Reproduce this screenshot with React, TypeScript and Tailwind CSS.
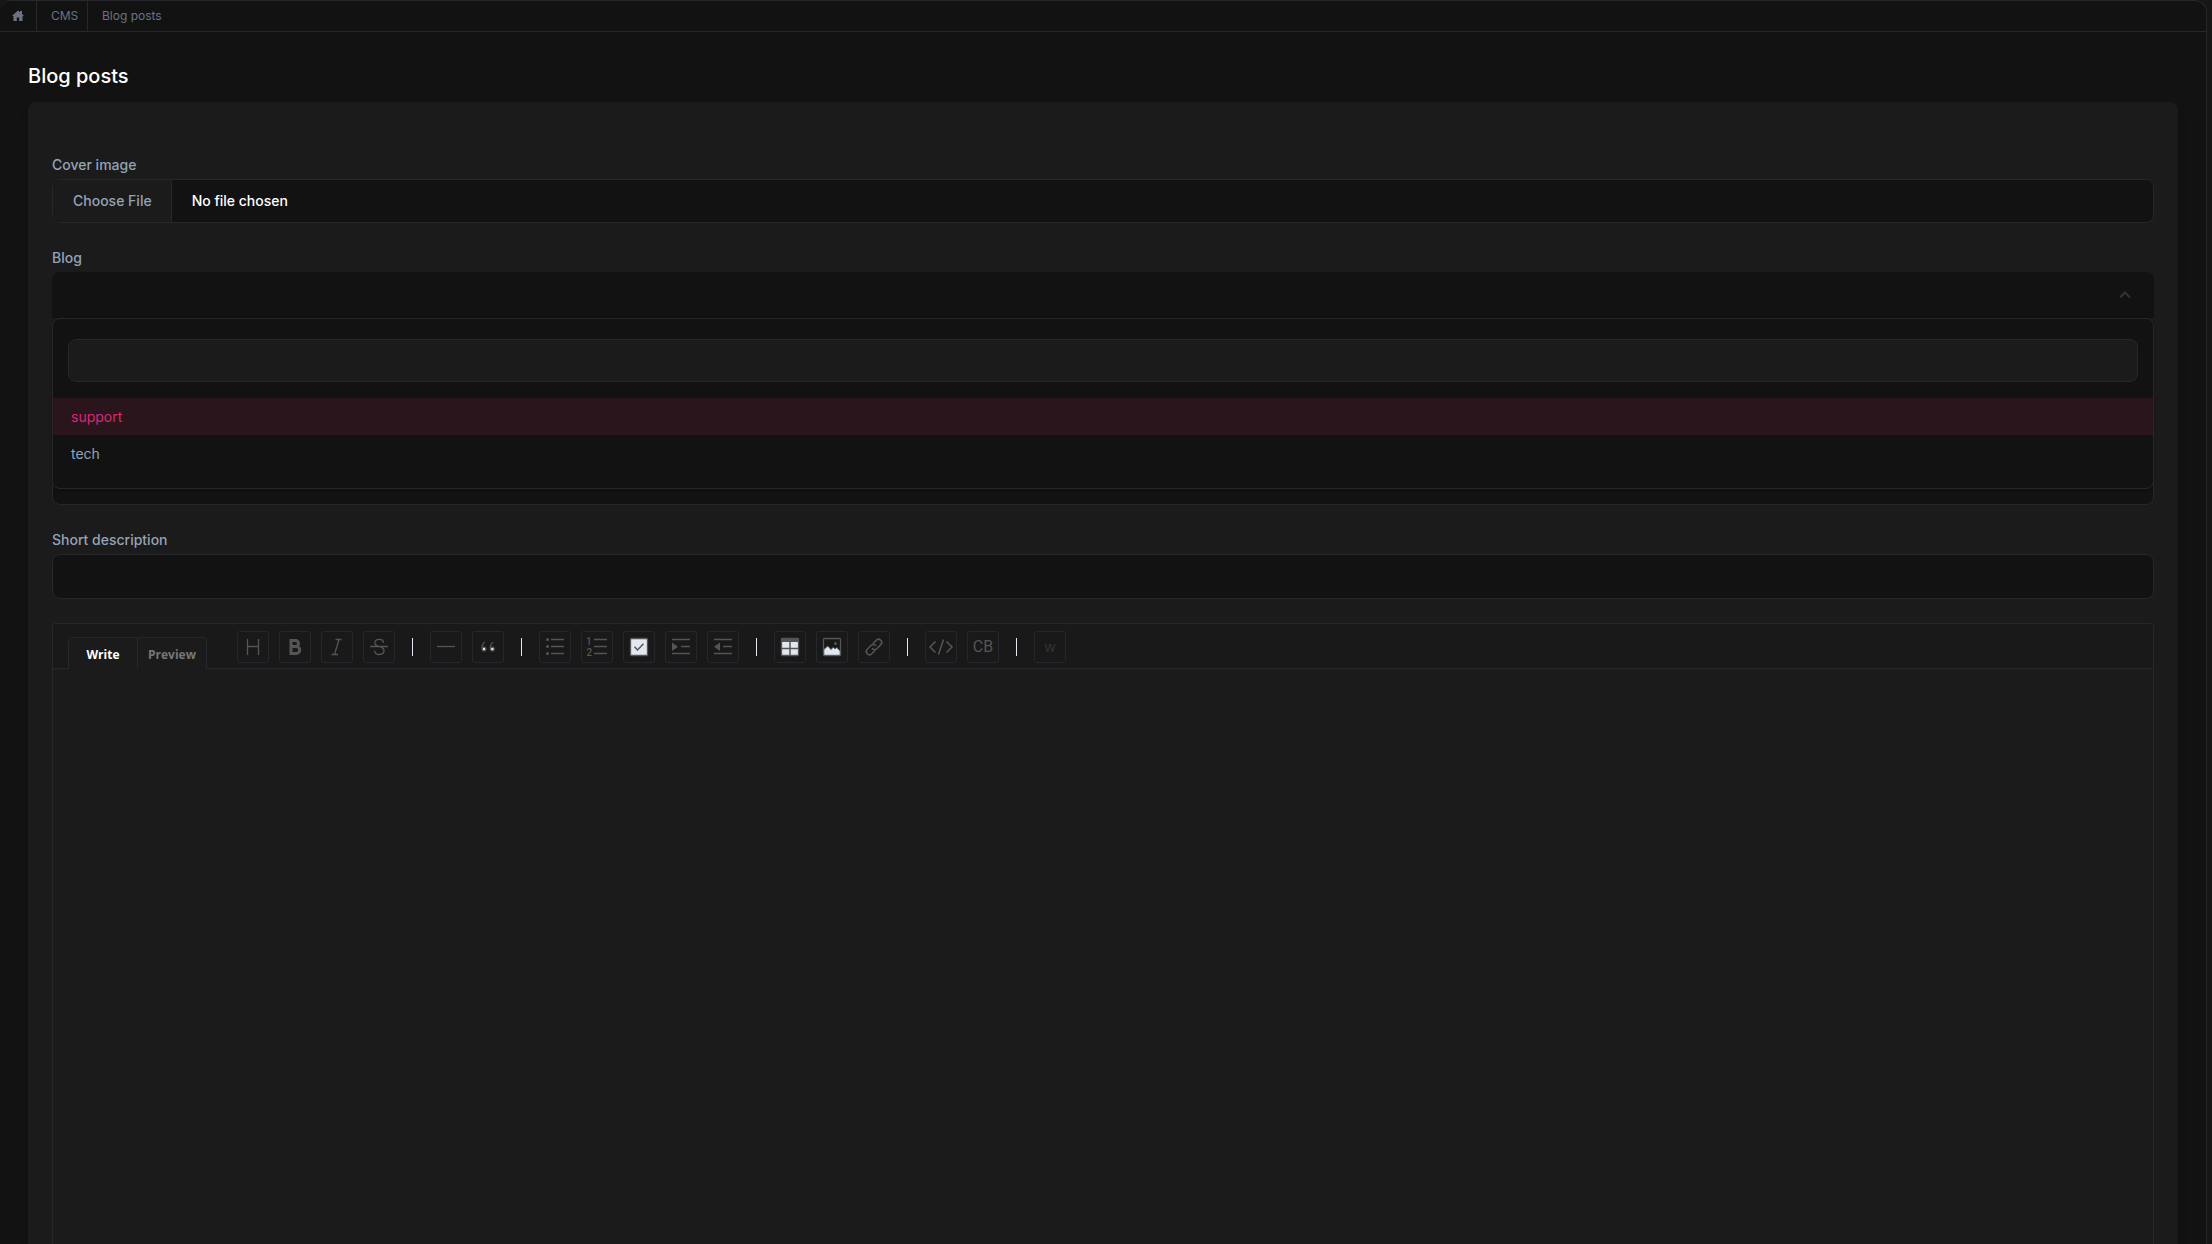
import type { ReactNode } from "react";

const fieldClass =
  "block h-[45px] w-full rounded-lg border border-[#25272b] bg-[#121212] px-5 text-sm text-white outline-none";
const labelClass = "mb-1 block text-sm leading-[21px] font-medium text-[#94a3b8]";

function Icon({ children }: { children: ReactNode }) {
  return (
    <svg viewBox="0 0 32 32" className="size-8 shrink-0" fill="none" stroke="#555" strokeWidth="1.3" aria-hidden="true">
      {children}
    </svg>
  );
}

type Tool = { name: string; icon: ReactNode };

const groups: Tool[][] = [
  [
    { name: "Headings", icon: <Icon><path d="M10.5 8v16M21.5 8v16M10.5 15.500h11" /></Icon> },
    {
      name: "Bold",
      icon: (
        <Icon>
          <path d="M12 9.500h4.500a3 3 0 0 1 0 6H12zM12 15.500h5.200a3.500 3.500 0 0 1 0 7H12z" strokeWidth="3" />
        </Icon>
      ),
    },
    { name: "Italic", icon: <Icon><path d="M14.500 8.500h6M10.500 23.500h6.500M18 8.500l-4.500 15" /></Icon> },
    {
      name: "Strike",
      icon: (
        <Icon>
          <path d="M7 15.500h18M20.500 12c0-2.300-1.800-3.700-4.300-3.700s-4.300 1.400-4.300 3.500c0 2 1.500 3 4.100 3.700M17.500 15.800c2.200.7 3.500 1.700 3.500 3.800 0 2.400-2 3.900-4.700 3.900-2.800 0-4.800-1.500-4.800-4" />
        </Icon>
      ),
    },
  ],
  [
    { name: "Line", icon: <Icon><path d="M7 15.500h18" /></Icon> },
    {
      name: "Blockquote",
      icon: (
        <Icon>
          <path d="M13 11.200c-1.700.9-3 3-3 6M21.300 11.200c-1.700.9-3 3-3 6" />
          <circle cx="12" cy="18" r="1.900" fill="#e2e8f0" />
          <circle cx="20.300" cy="18" r="1.900" fill="#e2e8f0" />
        </Icon>
      ),
    },
  ],
  [
    {
      name: "Unordered list",
      icon: (
        <Icon>
          <path d="M12 8.500h13M12 15.500h13M12 22.500h13" />
          <g fill="#555" stroke="none">
            <circle cx="8.500" cy="8.500" r="1.500" />
            <circle cx="8.500" cy="15.500" r="1.500" />
            <circle cx="8.500" cy="22.500" r="1.500" />
          </g>
        </Icon>
      ),
    },
    {
      name: "Ordered list",
      icon: (
        <Icon>
          <path d="M13 8.500h13M13 15.500h13M13 22.500h13" />
          <g fill="#555" stroke="none" fontFamily="Roboto, sans-serif" fontSize="10" fontWeight="500">
            <text x="5" y="13.500">1</text>
            <text x="5.500" y="25">2</text>
          </g>
        </Icon>
      ),
    },
    {
      name: "Task",
      icon: (
        <Icon>
          <rect x="7.500" y="7.500" width="17" height="17" rx="1" fill="#e2e8f0" />
          <path d="M11.500 15.800l3 3.200 6-6.300" strokeWidth="1.500" />
        </Icon>
      ),
    },
    {
      name: "Indent",
      icon: (
        <Icon>
          <path d="M7 8.500h18M16 15.500h9M7 22.500h18" />
          <path d="M7 11.500l6 4.200-6 4.200z" fill="#555" stroke="none" />
        </Icon>
      ),
    },
    {
      name: "Outdent",
      icon: (
        <Icon>
          <path d="M7 8.500h18M16 15.500h9M7 22.500h18" />
          <path d="M13 11.500l-6 4.200 6 4.200z" fill="#555" stroke="none" />
        </Icon>
      ),
    },
  ],
  [
    {
      name: "Insert table",
      icon: (
        <Icon>
          <rect x="7.500" y="7.500" width="17" height="17" rx="1" fill="#e2e8f0" />
          <path d="M7 7h18v4H7z" fill="#555" stroke="none" />
          <path d="M16 11v13.500M7.500 17.500h17" strokeWidth="1.500" />
        </Icon>
      ),
    },
    {
      name: "Insert image",
      icon: (
        <Icon>
          <rect x="7.500" y="7.500" width="17" height="17" rx="1" />
          <path d="M7.800 18.500l4-3.500 3.200 3.500 2.300-2.300 1.700 1.700 1.800-1.400 3.400 3.500v4.300H7.800z" fill="#e2e8f0" strokeWidth="1" />
          <circle cx="19.500" cy="12.500" r="1.500" fill="#555" stroke="none" />
        </Icon>
      ),
    },
    {
      name: "Insert link",
      icon: (
        <Icon>
          <g transform="rotate(-45 16 16)" strokeWidth="1.500">
            <path d="M14.500 19.200H9.700a3.200 3.200 0 0 1 0-6.400h5.500a3.200 3.200 0 0 1 3.100 3.700" />
            <path d="M17.500 12.800h4.800a3.200 3.200 0 0 1 0 6.400h-5.500a3.200 3.200 0 0 1-3.100-3.700" />
          </g>
        </Icon>
      ),
    },
  ],
  [
    {
      name: "Code",
      icon: (
        <Icon>
          <path d="M10.500 10.500L5 16l5.500 5.500M21.500 10.500L27 16l-5.500 5.500M18.500 8.500l-5 15" strokeWidth="1.500" />
        </Icon>
      ),
    },
    {
      name: "Code block",
      icon: <span className="font-['Roboto',sans-serif] text-base text-[#555]">CB</span>,
    },
  ],
  [{ name: "Widget", icon: <span className="font-['Noto_Sans',sans-serif] text-sm text-[#333]">w</span> }],
];

function Toolbar() {
  return (
    <div className="flex h-[45px] items-start border-b border-[#25272b] bg-[#191919] pl-[15px]">
      <div role="tablist" className="mt-[13px] mr-[25px] flex font-['Open_Sans',sans-serif] text-xs font-bold">
        <button role="tab" aria-selected="true" className="h-[33px] w-[70px] rounded-tl border border-[#25272b] bg-[#1b1b1b] pt-[3px] text-white">
          Write
        </button>
        <button role="tab" aria-selected="false" className="-ml-px h-[33px] w-[70px] rounded-t border border-[#25272b] bg-[#1b1b1b] pt-[3px] text-[#777]">
          Preview
        </button>
      </div>
      {groups.map((group, i) => (
        <div key={i} className="flex">
          {i > 0 && <span className="mx-3 mt-[14px] h-[18px] w-px bg-[#e2e8f0]" />}
          {group.map((tool) => (
            <button
              key={tool.name}
              aria-label={tool.name}
              className="mx-[5px] mt-[7px] flex size-8 items-center justify-center rounded-[3px] border border-[#25272d] bg-[#191919]"
            >
              {tool.icon}
            </button>
          ))}
        </div>
      ))}
    </div>
  );
}

function BlogSelect() {
  return (
    <div className="relative z-10">
      <button
        id="blog"
        aria-haspopup="listbox"
        aria-expanded="true"
        className="flex h-[45px] w-full items-center justify-end rounded-t-lg bg-[#121212] pr-[23px]"
      >
        <svg viewBox="0 0 12 8" className="h-2 w-3" fill="none" stroke="#30333a" strokeWidth="2" aria-hidden="true">
          <path d="M1 6.500L6 1.500l5 5" />
        </svg>
      </button>
      <div className="absolute inset-x-0 top-full">
        <div className="h-px bg-[#121212]" />
        <div className="rounded-lg border border-[#25272b] bg-[#121212] pb-4 shadow-sm">
          <div className="px-[15px] pt-5 pb-4">
            <input
              type="search"
              aria-label="Search blogs"
              className="block h-[43px] w-full rounded-lg border border-[#25272b] bg-[#1b1b1b] px-3 text-sm text-white outline-none"
            />
          </div>
          <ul role="listbox" aria-labelledby="blog-label" className="text-sm">
            <li role="option" aria-selected="true" className="flex h-[37px] items-center bg-[#2a151d] px-[18px] text-[#db2777]">
              support
            </li>
            <li role="option" aria-selected="false" className="flex h-[37px] items-center px-[18px] text-[#94a3b8]">
              tech
            </li>
          </ul>
        </div>
      </div>
    </div>
  );
}

export default function App() {
  return (
    <div className="h-screen overflow-hidden bg-[#161616] pr-[5px] font-['Inter',sans-serif]">
      <main className="flex h-full flex-col rounded-t-xl border-t border-r border-[#25272b] bg-[#121212]">
        <nav aria-label="Breadcrumb" className="shrink-0 border-b border-[#25272b]">
          <ol className="flex h-[30px] text-xs text-[#6b7280]">
            <li className="flex w-[37px] items-center border-r border-[#25272b] pl-3">
              <a href="#home" aria-label="Home">
                <svg viewBox="0 0 12 12" className="size-3" fill="#6b7280" aria-hidden="true">
                  <path d="M6 .5L8 2.200V1h2v3l1.700 1.600-.6.700H10.500V11H7.200V7.500H4.800V11H1.500V6.300H.9L.3 5.600z" />
                </svg>
              </a>
            </li>
            <li className="flex w-[51px] items-center border-r border-[#25272b] pl-[14px]">
              <a href="#cms">CMS</a>
            </li>
            <li className="flex items-center pl-[14px]">
              <a href="#posts">Blog posts</a>
            </li>
          </ol>
        </nav>

        <h1 className="mx-7 mt-[30px] mb-3 shrink-0 text-xl leading-7 font-medium text-white">Blog posts</h1>

        <form className="mx-7 flex min-h-0 flex-1 flex-col rounded-t-lg bg-[#1b1b1b] px-6 pt-[52px] shadow-lg">
          <div className="mb-6">
            <label htmlFor="cover" className={labelClass}>
              Cover image
            </label>
            <input
              id="cover"
              type="file"
              className="block h-[44px] w-full rounded-lg border border-[#25272b] bg-[#121212] text-sm font-medium text-white file:mr-5 file:h-[42px] file:rounded-none file:rounded-l-lg file:border-0 file:border-r file:border-solid file:border-[#25272b] file:bg-[#1b1b1b] file:pr-[19px] file:pl-5 file:font-medium file:text-[#94a3b8]"
            />
          </div>
          <div className="mb-6">
            <label id="blog-label" htmlFor="blog" className={labelClass}>
              Blog
            </label>
            <BlogSelect />
          </div>
          <input aria-label="Title" className={`${fieldClass} mt-[25px]`} />
          <input aria-label="Slug" className={`${fieldClass} mt-[49px]`} />
          <div className="my-6">
            <label htmlFor="short" className={labelClass}>
              Short description
            </label>
            <input id="short" className={fieldClass} />
          </div>
          <div className="flex min-h-0 flex-1 flex-col rounded-t border-x border-t border-[#25272b]">
            <Toolbar />
            <textarea aria-label="Post content" className="w-full flex-1 resize-none bg-[#1b1b1b] p-6 text-sm text-white outline-none" />
          </div>
        </form>
      </main>
    </div>
  );
}
